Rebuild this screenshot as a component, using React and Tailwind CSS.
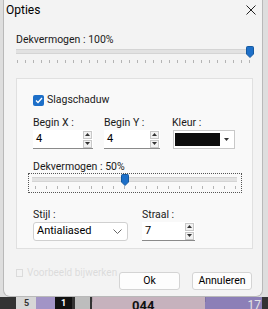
import React from 'react'

function Ticks({ count, className }) {
	return (
		<div className={"flex justify-between " + className}>
			{Array.from({ length: count }).map((_, i) => (
				<div key={i} className="w-px h-[3px] bg-[#b4b4b4]"></div>
			))}
		</div>
	)
}

function Thumb() {
	return (
		<svg width="8" height="12" viewBox="0 0 8 12">
			<path d="M0.5 1.5 Q0.5 0.5 1.5 0.5 H6.5 Q7.5 0.5 7.5 1.5 V8 L4 11.5 L0.5 8 Z" fill="#1d6fc8" stroke="#15599f" />
		</svg>
	)
}

function Spin({ value, width }) {
	return (
		<div className={"flex items-center h-[19px] bg-white border-b border-[#8a8a8a] " + width}>
			<span className="flex-1 pl-[3px] text-[11px] text-black">{value}</span>
			<div className="flex flex-col gap-px mr-[1px]">
				<div className="w-[9px] h-[8px] bg-[#f2f2f2] border border-[#c8c8c8] flex items-center justify-center">
					<svg width="5" height="3" viewBox="0 0 5 3"><path d="M0 3 L2.5 0 L5 3 Z" fill="#333" /></svg>
				</div>
				<div className="w-[9px] h-[8px] bg-[#f2f2f2] border border-[#c8c8c8] flex items-center justify-center">
					<svg width="5" height="3" viewBox="0 0 5 3"><path d="M0 0 L2.5 3 L5 0 Z" fill="#333" /></svg>
				</div>
			</div>
		</div>
	)
}

export default function App() {
	return (
		<div className="w-[268px] h-[309px] bg-[#dedede] overflow-hidden relative text-[10.5px]" style={{ fontFamily: 'Roboto, "Liberation Sans", sans-serif' }}>
			{/* window behind the dialog */}
			<div className="absolute left-0 right-0 bottom-0 h-[12px] flex bg-[#333]">
				<div className="w-[16px]"></div>
				<div className="w-[20px] bg-[#d6d6d6] text-[#333] text-[9px] leading-[12px] pl-[8px] font-bold">5</div>
				<div className="w-[19px] bg-[#a294c6]"></div>
				<div className="w-[17px] bg-[#111] text-white text-[9px] leading-[12px] pl-[6px] font-bold">1</div>
				<div className="w-[3px]"></div>
				<div className="w-[15px] bg-[#bdbdbd]"></div>
				<div className="w-[2px]"></div>
				<div className="w-[113px] bg-[#c6b2bd] text-[13px] font-bold leading-[17px] pl-[40px] text-[#111]">044</div>
				<div className="w-[57px] bg-[#8c7fb7] text-[#e4e4e4] text-[12px] leading-[17px] text-right pr-[1px]">17</div>
			</div>
			<div className="absolute left-[92px] top-[262px] w-px h-[40px] bg-[#000]/10"></div>
			<div className="absolute left-[205px] top-[272px] w-px h-[30px] bg-[#000]/10"></div>

			<div className="absolute left-[3px] top-0 w-[260px] h-[297px] bg-[#f3f3f3] border-x border-b border-[#b9b9b9] rounded-b-[7px] flex flex-col text-[#1a1a1a]">
				<div className="flex items-center justify-between h-[20px] pl-[2px] pr-[6px]">
					<span className="text-[12px] text-black">Opties</span>
					<svg width="10" height="10" viewBox="0 0 10 10"><path d="M0.5 0.5 L9.5 9.5 M9.5 0.5 L0.5 9.5" stroke="#222" strokeWidth="1" /></svg>
				</div>
				<div className="pl-[12px] pr-[8px] pt-[13px]">
					<div className="leading-[14px]">Dekvermogen : 100%</div>
					<div className="relative h-[12px] -mt-px">
						<div className="absolute left-0 right-[4px] top-[3px] h-[5px] bg-[#e2e2e2] border-y border-[#d4d4d4]"></div>
						<div className="absolute right-0 top-0"><Thumb /></div>
					</div>
					<Ticks count={30} className="mt-[2px] pl-[1px] pr-[4px]" />
				</div>

				<div className="ml-[12px] mr-[9px] mt-[15px] h-[171px] bg-[#f9f9f9] border border-[#e0e0e0] pl-[16px] pt-[15px]">
					<div className="flex items-center gap-[3px] h-[12px]">
						<div className="w-[11px] h-[11px] rounded-[2px] bg-[#1d6fc8] flex items-center justify-center">
							<svg width="8" height="7" viewBox="0 0 8 7"><path d="M1 3.5 L3 5.5 L7 1" stroke="white" strokeWidth="1.3" fill="none" /></svg>
						</div>
						<span>Slagschaduw</span>
					</div>
					<div className="flex mt-[10px]">
						<div className="w-[71px]">
							<div className="leading-[14px]">Begin X :</div>
							<Spin value="4" width="w-[60px]" />
						</div>
						<div className="w-[68px]">
							<div className="leading-[14px]">Begin Y :</div>
							<Spin value="4" width="w-[56px]" />
						</div>
						<div>
							<div className="leading-[14px]">Kleur :</div>
							<div className="ml-px w-[62px] h-[19px] bg-white border border-[#c8c8c8] flex items-center pl-[1px] pr-[5px]">
								<div className="w-[45px] h-[13px] bg-[#0c0c0c]"></div>
								<div className="flex-1 flex justify-end">
									<svg width="5" height="3" viewBox="0 0 5 3"><path d="M0 0 L2.5 3 L5 0 Z" fill="#333" /></svg>
								</div>
							</div>
						</div>
					</div>
					<div className="leading-[14px] mt-[11px]">Dekvermogen : 50%</div>
					<div className="-mt-px -ml-[5px] w-[214px] h-[20px] border border-dotted border-[#555] relative">
						<div className="absolute left-[3px] right-[4px] top-[3px] h-[5px] bg-[#e2e2e2] border-y border-[#d4d4d4]"></div>
						<div className="absolute left-[92px] top-0"><Thumb /></div>
						<Ticks count={19} className="mt-[12px] pl-[6px] pr-[5px]" />
					</div>
					<div className="flex mt-[15px]">
						<div className="w-[109px]">
							<div className="leading-[14px]">Stijl :</div>
							<div className="w-[95px] h-[19px] bg-white border border-[#d0d0d0] rounded-[3px] flex items-center justify-between pl-[3px] pr-[5px]">
								<span className="text-[11px] text-black">Antialiased</span>
								<svg width="9" height="5" viewBox="0 0 9 5"><path d="M0.5 0.5 L4.5 4.5 L8.5 0.5" stroke="#666" fill="none" /></svg>
							</div>
						</div>
						<div>
							<div className="leading-[14px]">Straal :</div>
							<Spin value="7" width="w-[53px]" />
						</div>
					</div>
				</div>

				<div className="flex items-center mt-[23px] pl-[12px] pr-[10px] relative">
					<div className="absolute left-[12px] -top-[7px] flex items-center gap-[4px] opacity-[0.12]">
						<div className="w-[7px] h-[8px] border border-[#333]"></div>
						<span className="text-[10px] text-[#333]">Voorbeeld bijwerken</span>
					</div>
					<div className="flex-1"></div>
					<div className="w-[61px] h-[18px] bg-[#fdfdfd] border border-[#d4d4d4] rounded-[3px] flex items-center justify-center text-black">Ok</div>
					<div className="w-[60px] h-[18px] ml-[12px] bg-[#fdfdfd] border border-[#d4d4d4] rounded-[3px] flex items-center justify-center text-black">Annuleren</div>
				</div>
			</div>
		</div>
	)
}
